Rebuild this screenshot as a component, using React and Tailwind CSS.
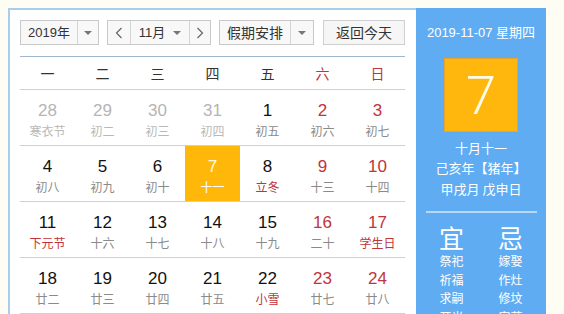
const WEEK = ['一', '二', '三', '四', '五', '六', '日'];

const ROWS = [
  [
    { d: '28', l: '寒衣节', t: 'prev' },
    { d: '29', l: '初二', t: 'prev' },
    { d: '30', l: '初三', t: 'prev' },
    { d: '31', l: '初四', t: 'prev' },
    { d: '1', l: '初五' },
    { d: '2', l: '初六', t: 'wk' },
    { d: '3', l: '初七', t: 'wk' },
  ],
  [
    { d: '4', l: '初八' },
    { d: '5', l: '初九' },
    { d: '6', l: '初十' },
    { d: '7', l: '十一', t: 'today' },
    { d: '8', l: '立冬', fest: true },
    { d: '9', l: '十三', t: 'wk' },
    { d: '10', l: '十四', t: 'wk' },
  ],
  [
    { d: '11', l: '下元节', fest: true },
    { d: '12', l: '十六' },
    { d: '13', l: '十七' },
    { d: '14', l: '十八' },
    { d: '15', l: '十九' },
    { d: '16', l: '二十', t: 'wk' },
    { d: '17', l: '学生日', t: 'wk', fest: true },
  ],
  [
    { d: '18', l: '廿二' },
    { d: '19', l: '廿三' },
    { d: '20', l: '廿四' },
    { d: '21', l: '廿五' },
    { d: '22', l: '小雪', fest: true },
    { d: '23', l: '廿七', t: 'wk' },
    { d: '24', l: '廿八', t: 'wk' },
  ],
];

const YI = ['祭祀', '祈福', '求嗣', '开光'];
const JI = ['嫁娶', '作灶', '修坟', '安葬'];

function Caret() {
  return <span className="inline-block h-0 w-0 border-x-[4px] border-t-[4px] border-x-transparent border-t-[#777]" />;
}

function DayCell({ cell }) {
  const today = cell.t === 'today';
  let num = 'text-[#111]';
  if (cell.t === 'prev') num = 'text-[#b5b5b5]';
  if (cell.t === 'wk') num = 'text-[#c1343a]';
  if (today) num = 'text-[#fffbe0]';
  let lunar = 'text-[#8a8a8a]';
  if (cell.t === 'prev') lunar = 'text-[#b8b8b8]';
  if (cell.fest) lunar = 'text-[#c1343a]';
  if (today) lunar = 'text-white';
  return (
    <div className={`flex h-[55px] flex-col items-center pt-[11px] ${today ? 'bg-[#ffb80a]' : ''}`}>
      <span className={`font-['Liberation_Sans',sans-serif] text-[17px] leading-[20px] ${num}`}>{cell.d}</span>
      <span className={`mt-[1px] text-[12px] leading-[18px] ${lunar}`}>{cell.l}</span>
    </div>
  );
}

export default function App() {
  return (
    <div className="min-h-screen overflow-hidden bg-[#fdfdf4] pl-[8px] pt-[8px] font-['Noto_Sans_CJK_SC',sans-serif]">
      <div className="flex h-[320px]">
        <div className="w-[408px] border-l-2 border-t-2 border-[#a9cdef] bg-white pl-[10px] pt-[10px]">
          <div className="flex h-[25px] w-[385px] text-[13px] text-[#333]">
            <div className="flex w-[79px] border border-[#c9c9c9] bg-[#f8f8f8]">
              <span className="flex w-[56px] items-center justify-center font-['Liberation_Sans','Noto_Sans_CJK_SC',sans-serif]">2019年</span>
              <span className="flex flex-1 items-center justify-center border-l border-[#d4d4d4]"><Caret /></span>
            </div>
            <div className="ml-[8px] flex w-[104px] border border-[#c9c9c9] bg-[#f8f8f8]">
              <span className="flex w-[22px] items-center justify-center text-[#666]">
                <svg width="8" height="12" viewBox="0 0 8 12"><path d="M6.5 1 1.5 6l5 5" fill="none" stroke="#666" strokeWidth="1.2" /></svg>
              </span>
              <span className="flex w-[60px] items-center justify-center gap-[8px] border-x border-[#d4d4d4] font-['Liberation_Sans','Noto_Sans_CJK_SC',sans-serif]">
                11月<Caret />
              </span>
              <span className="flex flex-1 items-center justify-center">
                <svg width="8" height="12" viewBox="0 0 8 12"><path d="M1.5 1l5 5-5 5" fill="none" stroke="#666" strokeWidth="1.2" /></svg>
              </span>
            </div>
            <div className="ml-[8px] flex w-[95px] border border-[#c9c9c9] bg-[#f8f8f8]">
              <span className="flex w-[70px] items-center justify-center text-[14px]">假期安排</span>
              <span className="flex flex-1 items-center justify-center border-l border-[#d4d4d4]"><Caret /></span>
            </div>
            <div className="ml-[9px] flex w-[82px] items-center justify-center border border-[#cfcfcf] bg-[#f6f6f6] text-[14px]">
              返回今天
            </div>
          </div>

          <div className="mt-[11px] w-[385px] border-t border-[#9fb6cc]">
            <div className="grid h-[33px] grid-cols-7 border-b border-[#d0d0d0] text-[14px]">
              {WEEK.map((w, i) => (
                <div key={w} className={`flex items-center justify-center ${i >= 5 ? 'text-[#c1343a]' : 'text-[#333]'}`}>{w}</div>
              ))}
            </div>
            {ROWS.map((row, r) => (
              <div key={r} className="grid grid-cols-7 border-b border-[#d0d0d0]">
                {row.map((cell) => (
                  <DayCell key={cell.d + cell.l} cell={cell} />
                ))}
              </div>
            ))}
          </div>
        </div>

        <div className="flex w-[130px] flex-col items-center bg-[#60acf3] text-white">
          <div className="mt-[16px] text-[13px] leading-[18px] font-['Liberation_Sans','Noto_Sans_CJK_SC',sans-serif]">2019-11-07 星期四</div>
          <div className="mt-[16px] flex h-[74px] w-[74px] items-center justify-center border border-[#e8a628] bg-[#ffb70d] font-['Roboto',sans-serif] text-[54px] font-light text-[#fffbe6]">
            7
          </div>
          <div className="mt-[6px] text-[13px] leading-[20px]">十月十一</div>
          <div className="text-[13px] leading-[20px]">己亥年【猪年】</div>
          <div className="text-[13px] leading-[21px]">甲戌月 戊申日</div>
          <div className="mt-[12px] w-[111px] border-t-2 border-[#b9d8f7]" />
          <div className="mt-[9px] flex w-[110px] justify-between px-[13px]">
            <div className="flex flex-col items-center">
              <span className="text-[25px] leading-[30px]">宜</span>
              {YI.map((t) => (
                <span key={t} className="text-[12px] leading-[18.5px]">{t}</span>
              ))}
            </div>
            <div className="flex flex-col items-center">
              <span className="text-[25px] leading-[30px]">忌</span>
              {JI.map((t) => (
                <span key={t} className="text-[12px] leading-[18.5px]">{t}</span>
              ))}
            </div>
          </div>
        </div>
      </div>
    </div>
  );
}
